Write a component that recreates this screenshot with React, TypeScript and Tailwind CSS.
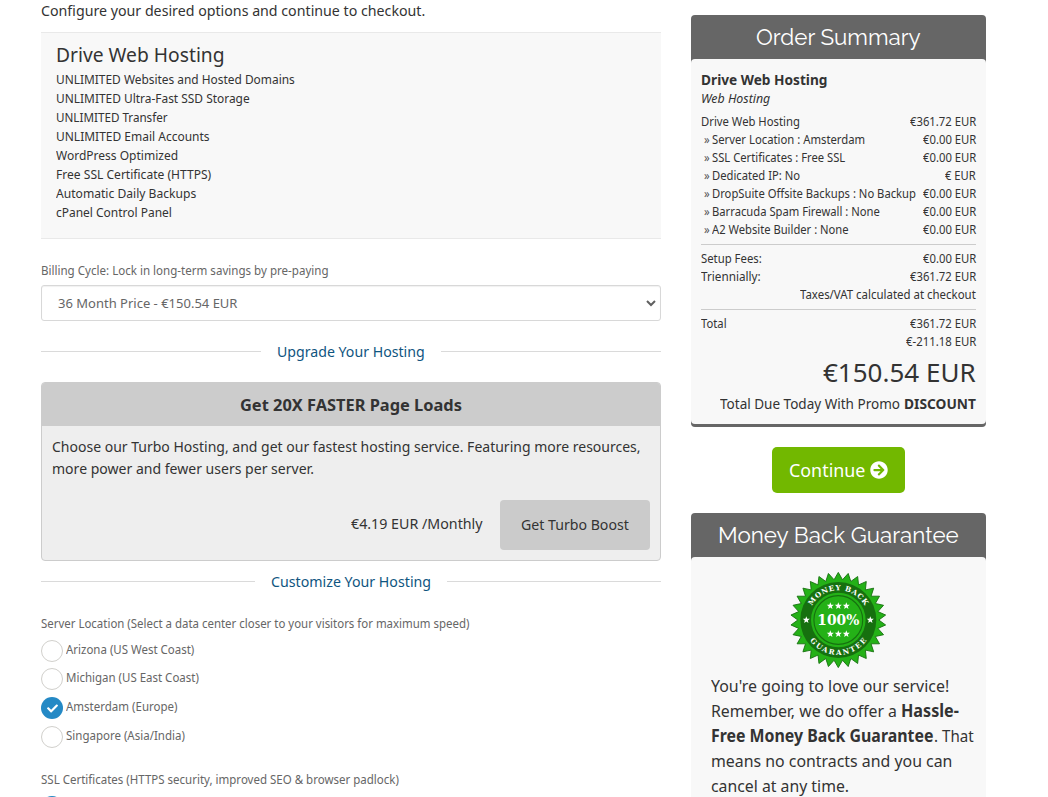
import { useLayoutEffect, useRef, useState } from "react";
import type { ReactNode } from "react";
import { FaArrowCircleRight, FaCheck } from "react-icons/fa";

/** One line of text set to a fixed measure by condensing its glyphs. */
function Fit({ w, className = "", children }: { w: number; className?: string; children: ReactNode }) {
  const ref = useRef<HTMLSpanElement>(null);
  const [scale, setScale] = useState(1);
  useLayoutEffect(() => {
    if (ref.current) setScale(w / ref.current.offsetWidth);
  }, [w]);
  return (
    <span className={`inline-block whitespace-nowrap text-left ${className}`} style={{ width: w }}>
      <span ref={ref} className="inline-block origin-left" style={{ transform: `scaleX(${scale})` }}>
        {children}
      </span>
    </span>
  );
}

const features: [string, number][] = [
  ["UNLIMITED Websites and Hosted Domains", 239],
  ["UNLIMITED Ultra-Fast SSD Storage", 193.5],
  ["UNLIMITED Transfer", 112],
  ["UNLIMITED Email Accounts", 154],
  ["WordPress Optimized", 122],
  ["Free SSL Certificate (HTTPS)", 155],
  ["Automatic Daily Backups", 140.5],
  ["cPanel Control Panel", 116],
];

const options: [string, number, string, number][] = [
  ["Server Location : Amsterdam", 153, "€0.00 EUR", 53],
  ["SSL Certificates : Free SSL", 133, "€0.00 EUR", 53],
  ["Dedicated IP: No", 88, "€ EUR", 31],
  ["DropSuite Offsite Backups : No Backup", 204, "€0.00 EUR", 53],
  ["Barracuda Spam Firewall : None", 167.5, "€0.00 EUR", 53],
  ["A2 Website Builder : None", 137, "€0.00 EUR", 53],
];

function Divider({ label, w }: { label: string; w: number }) {
  return (
    <div className="flex h-[22px] items-center gap-4 text-[15px] leading-[22px] text-[#0f5580]">
      <div className="h-px flex-1 bg-[#dadada]" />
      <Fit w={w}>{label}</Fit>
      <div className="h-px flex-1 bg-[#dadada]" />
    </div>
  );
}

function RadioMark({ checked = false }: { checked?: boolean }) {
  return checked ? (
    <span className="flex size-[22px] shrink-0 items-center justify-center rounded-full bg-[#2489c5] text-white">
      <FaCheck size={11} />
    </span>
  ) : (
    <span className="size-[22px] shrink-0 rounded-full border border-[#d1d0cc] bg-white" />
  );
}

function Radio({ label, w, checked = false, className = "h-[29px]" }: { label: string; w: number; checked?: boolean; className?: string }) {
  return (
    <label className={`flex items-start gap-[3px] ${className}`}>
      <RadioMark checked={checked} />
      <Fit w={w} className="leading-[18px]">{label}</Fit>
    </label>
  );
}

function Row({ left, right }: { left?: ReactNode; right: ReactNode }) {
  return (
    <div className="flex h-[18px] justify-between">
      <span className="flex">{left}</span>
      {right}
    </div>
  );
}

function points(n: number, outer: number, inner: number, cx: number, cy: number) {
  return Array.from({ length: n * 2 }, (_, i) => {
    const a = (Math.PI * i) / n - Math.PI / 2;
    const r = i % 2 ? inner : outer;
    return `${(cx + r * Math.cos(a)).toFixed(2)},${(cy + r * Math.sin(a)).toFixed(2)}`;
  }).join(" ");
}

function Badge() {
  const stars: [number, number][] = [[41, 35], [49, 35], [57, 35], [41, 63], [49, 63], [57, 63], [17, 49], [81, 49]];
  return (
    <svg width="98" height="98" viewBox="-0.3 0 98 98" className="ml-[78px] block">
      <defs>
        <path id="arc-top" d="M19.2 49 A29.8 29.8 0 0 1 78.8 49" />
        <path id="arc-bottom" d="M14 49 A35 35 0 0 0 84 49" />
      </defs>
      <polygon points={points(30, 47.6, 40.5, 49, 49)} fill="#24b117" stroke="#16700f" strokeWidth="0.9" />
      <circle cx="49" cy="49" r="38" fill="#16700f" />
      <circle cx="49" cy="49" r="27.3" fill="#24b117" />
      <circle cx="49" cy="49" r="24.4" fill="none" stroke="#16700f" strokeWidth="1.1" />
      {stars.map(([x, y]) => (
        <polygon key={`${x}-${y}`} points={points(5, 3.7, 1.6, x, y)} fill="#fff" />
      ))}
      <g fill="#fff" fontFamily="'DejaVu Serif', serif" fontWeight="700" textAnchor="middle">
        <text x="49" y="54.3" fontSize="14.5" textLength="42" lengthAdjust="spacingAndGlyphs">100%</text>
        <text fontSize="7.2">
          <textPath href="#arc-top" startOffset="50%" textLength="64">MONEY BACK</textPath>
        </text>
        <text fontSize="7.2">
          <textPath href="#arc-bottom" startOffset="50%" textLength="66">GUARANTEE</textPath>
        </text>
      </g>
    </svg>
  );
}

function PanelTitle({ children, w }: { children: string; w: number }) {
  return (
    <h2 className="h-11 text-center font-['Raleway','Lato',sans-serif] text-[22px] leading-[44px] text-white">
      <Fit w={w}>{children}</Fit>
    </h2>
  );
}

export default function App() {
  return (
    <div className="flex h-[797px] w-[1048px] items-start gap-[30px] overflow-hidden bg-white pl-[41px] font-['Noto_Sans','Open_Sans',sans-serif] text-[13px] leading-[18px] text-[#333]">
      <main className="w-[620px]">
        <p className="h-[21px] text-[15px] leading-[21px]">
          <Fit w={384.5}>Configure your desired options and continue to checkout.</Fit>
        </p>

        <section className="mt-[11px] h-[207px] border-y border-[#e9e9e9] bg-[#f8f8f8] px-[15px] pt-[9px]">
          <h1 className="h-6 text-[20.5px] leading-6">
            <Fit w={169}>Drive Web Hosting</Fit>
          </h1>
          <ul className="mt-1">
            {features.map(([t, w]) => (
              <li key={t} className="h-[19px] leading-[19px]">
                <Fit w={w}>{t}</Fit>
              </li>
            ))}
          </ul>
        </section>

        <div className="mt-[22px] h-[18px] text-[#666]">
          <Fit w={287.5}>Billing Cycle: Lock in long-term savings by pre-paying</Fit>
        </div>
        <div className="mt-[6px] mb-[19px] flex h-9 items-center justify-between rounded-[3px] border border-[#d8d8d8] bg-white pr-[4px] pl-4 text-[#666] shadow-[inset_0_1px_1px_rgba(0,0,0,0.06)]">
          <Fit w={179}>36 Month Price - €150.54 EUR</Fit>
          <svg width="10" height="8" viewBox="0 0 10 8" fill="none">
            <path d="M1 2 L5 6 L9 2" stroke="#606060" strokeWidth="2" />
          </svg>
        </div>

        <Divider label="Upgrade Your Hosting" w={148} />

        <section className="mt-5 mb-[9px] h-[179px] overflow-hidden rounded border border-[#ccc] bg-[#eee] text-[15px]">
          <h2 className="h-[43px] bg-[#ccc] text-center text-[15.5px] leading-[44px] font-bold">
            <Fit w={222}>Get 20X FASTER Page Loads</Fit>
          </h2>
          <div className="px-[10px] pt-[9px]">
            <div className="h-[22px] leading-[22px]">
              <Fit w={589}>Choose our Turbo Hosting, and get our fastest hosting service. Featuring more resources,</Fit>
            </div>
            <div className="h-[22px] leading-[22px]">
              <Fit w={262}>more power and fewer users per server.</Fit>
            </div>
            <div className="mt-[21px] flex h-[50px] justify-end gap-[17px]">
              <Fit w={132} className="leading-[47px]">€4.19 EUR /Monthly</Fit>
              <button className="h-[50px] w-[150px] rounded bg-[#cbcbcb] text-[14px] leading-[50px]">
                <Fit w={108}>Get Turbo Boost</Fit>
              </button>
            </div>
          </div>
        </section>

        <Divider label="Customize Your Hosting" w={160} />

        <div className="text-[#666]">
          <div className="mt-[22px] mb-2 h-[18px]">
            <Fit w={428}>Server Location (Select a data center closer to your visitors for maximum speed)</Fit>
          </div>
          <Radio label="Arizona (US West Coast)" w={128} className="h-7" />
          <Radio label="Michigan (US East Coast)" w={132.5} />
          <Radio label="Amsterdam (Europe)" w={111.5} checked />
          <Radio label="Singapore (Asia/India)" w={118.5} className="h-[22px]" />
          <div className="mt-[22px] mb-2 h-[18px]">
            <Fit w={357.5}>SSL Certificates (HTTPS security, improved SEO &amp; browser padlock)</Fit>
          </div>
          <RadioMark checked />
        </div>
      </main>

      <aside className="w-[295px] pt-[15px]">
        <section className="rounded bg-[#666] pb-[3px]">
          <PanelTitle w={165}>Order Summary</PanelTitle>
          <div className="h-[365px] rounded bg-[#f8f8f8] px-[10px] pt-[12px]">
            <div className="h-[18px] text-[14px] font-bold">
              <Fit w={127}>Drive Web Hosting</Fit>
            </div>
            <div className="mb-[5px] h-[18px] italic">
              <Fit w={69.5}>Web Hosting</Fit>
            </div>
            <Row left={<Fit w={99}>Drive Web Hosting</Fit>} right={<Fit w={66}>€361.72 EUR</Fit>} />
            {options.map(([t, w, p, pw]) => (
              <Row
                key={t}
                left={
                  <>
                    <Fit w={6} className="mr-[2px] ml-[3px] text-[#555]">»</Fit>
                    <Fit w={w}>{t}</Fit>
                  </>
                }
                right={<Fit w={pw}>{p}</Fit>}
              />
            ))}
            <div className="mt-[6px] mb-1 h-px bg-[#ccc]" />
            <Row left={<Fit w={61}>Setup Fees:</Fit>} right={<Fit w={53}>€0.00 EUR</Fit>} />
            <Row left={<Fit w={59.5}>Triennially:</Fit>} right={<Fit w={66}>€361.72 EUR</Fit>} />
            <Row right={<Fit w={176}>Taxes/VAT calculated at checkout</Fit>} />
            <div className="mt-[6px] mb-1 h-px bg-[#ccc]" />
            <Row left={<Fit w={26}>Total</Fit>} right={<Fit w={66}>€361.72 EUR</Fit>} />
            <Row right={<Fit w={70}>€-211.18 EUR</Fit>} />
            <div className="mt-1 h-9 text-right text-[26px] leading-9">
              <Fit w={153}>€150.54 EUR</Fit>
            </div>
            <div className="mt-[2px] flex h-[22px] justify-end gap-1 text-[14.5px] leading-[22px]">
              <Fit w={180}>Total Due Today With Promo</Fit>
              <Fit w={72} className="font-bold">DISCOUNT</Fit>
            </div>
          </div>
        </section>

        <button className="mx-auto mt-5 flex h-[46px] w-[133px] items-center justify-center gap-[5px] rounded-[5px] bg-[#72b800] text-[18px] leading-[46px] text-white">
          <Fit w={76.5}>Continue</Fit>
          <FaArrowCircleRight size={18} />
        </button>

        <section className="mt-5 rounded bg-[#666]">
          <PanelTitle w={241}>Money Back Guarantee</PanelTitle>
          <div className="h-[260px] rounded bg-[#f8f8f8] px-5 pt-[14px] text-[17px] leading-[25px]">
            <Badge />
            <div className="mt-1 flex flex-col">
              <Fit w={238}>You're going to love our service!</Fit>
              <div className="flex gap-1">
                <Fit w={186}>Remember, we do offer a</Fit>
                <Fit w={58} className="font-bold">Hassle-</Fit>
              </div>
              <div className="flex">
                <Fit w={222.5} className="font-bold">Free Money Back Guarantee</Fit>
                <Fit w={40}>. That</Fit>
              </div>
              <Fit w={241}>means no contracts and you can</Fit>
              <Fit w={138.5}>cancel at any time.</Fit>
            </div>
          </div>
        </section>
      </aside>
    </div>
  );
}
